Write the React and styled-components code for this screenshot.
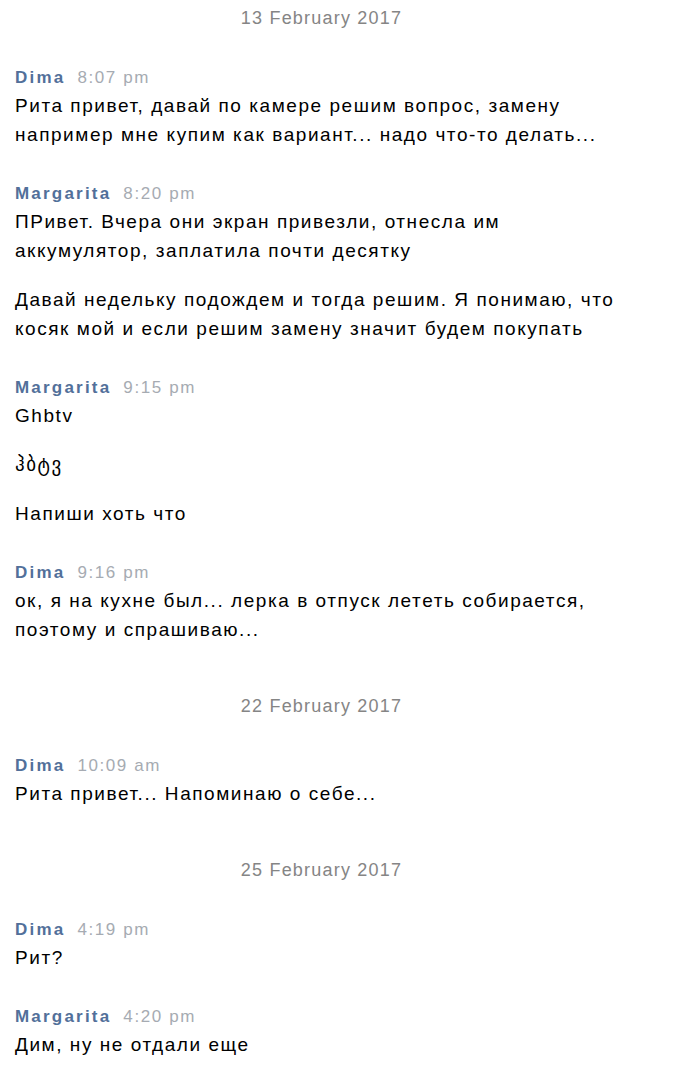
import React from 'react'
import styled, { createGlobalStyle } from 'styled-components'

const GlobalStyle = createGlobalStyle`
  html, body {
    margin: 0;
    padding: 0;
    background: #fff;
  }
  body {
    font-family: 'Liberation Sans', Arial, 'DejaVu Sans', sans-serif;
    -webkit-font-smoothing: antialiased;
  }
`

const History = styled.div`
  display: flex;
  flex-direction: column;
  gap: 50px;
  width: 613px;
  padding: 6px 0 0 15px;
`

const Day = styled.section`
  display: flex;
  flex-direction: column;
  gap: 35px;
`

const DateLabel = styled.div`
  text-align: center;
  font-size: 18px;
  line-height: 24px;
  letter-spacing: 1.2px;
  color: #858585;
`

const MessageList = styled.div`
  display: flex;
  flex-direction: column;
  gap: 32px;
`

const Message = styled.div`
  display: flex;
  flex-direction: column;
`

const Header = styled.div`
  display: flex;
  align-items: baseline;
  gap: 12px;
  line-height: 26px;
`

const Author = styled.span`
  font-size: 17px;
  font-weight: bold;
  letter-spacing: 2.2px;
  color: #52709a;
`

const Time = styled.span`
  font-size: 17px;
  letter-spacing: 1.6px;
  color: #a6abb2;
`

const Paragraph = styled.p`
  margin: 0;
  font-size: 19px;
  line-height: 29px;
  letter-spacing: 1.55px;
  color: #000;

  & + & {
    margin-top: 20px;
  }
`

const days = [
  {
    date: '13 February 2017',
    messages: [
      {
        author: 'Dima',
        time: '8:07 pm',
        text: [
          'Рита привет, давай по камере решим вопрос, замену например мне купим как вариант... надо что-то делать...'
        ]
      },
      {
        author: 'Margarita',
        time: '8:20 pm',
        text: [
          'ПРивет. Вчера они экран привезли, отнесла им аккумулятор, заплатила почти десятку',
          'Давай недельку подождем и тогда решим. Я понимаю, что косяк мой и если решим замену значит будем покупать'
        ]
      },
      {
        author: 'Margarita',
        time: '9:15 pm',
        text: ['Ghbtv', 'ჰბტვ', 'Напиши хоть что']
      },
      {
        author: 'Dima',
        time: '9:16 pm',
        text: [
          'ок, я на кухне был... лерка в отпуск лететь собирается, поэтому и спрашиваю...'
        ]
      }
    ]
  },
  {
    date: '22 February 2017',
    messages: [
      {
        author: 'Dima',
        time: '10:09 am',
        text: ['Рита привет... Напоминаю о себе...']
      }
    ]
  },
  {
    date: '25 February 2017',
    messages: [
      { author: 'Dima', time: '4:19 pm', text: ['Рит?'] },
      { author: 'Margarita', time: '4:20 pm', text: ['Дим, ну не отдали еще'] }
    ]
  }
]

const App = () => {
  return (
    <>
      <GlobalStyle />
      <History>
        {days.map((day) => (
          <Day key={day.date}>
            <DateLabel>{day.date}</DateLabel>
            <MessageList>
              {day.messages.map((msg, index) => (
                <Message key={index}>
                  <Header>
                    <Author>{msg.author}</Author>
                    <Time>{msg.time}</Time>
                  </Header>
                  {msg.text.map((line, i) => (
                    <Paragraph key={i}>{line}</Paragraph>
                  ))}
                </Message>
              ))}
            </MessageList>
          </Day>
        ))}
      </History>
    </>
  )
}

export default App
